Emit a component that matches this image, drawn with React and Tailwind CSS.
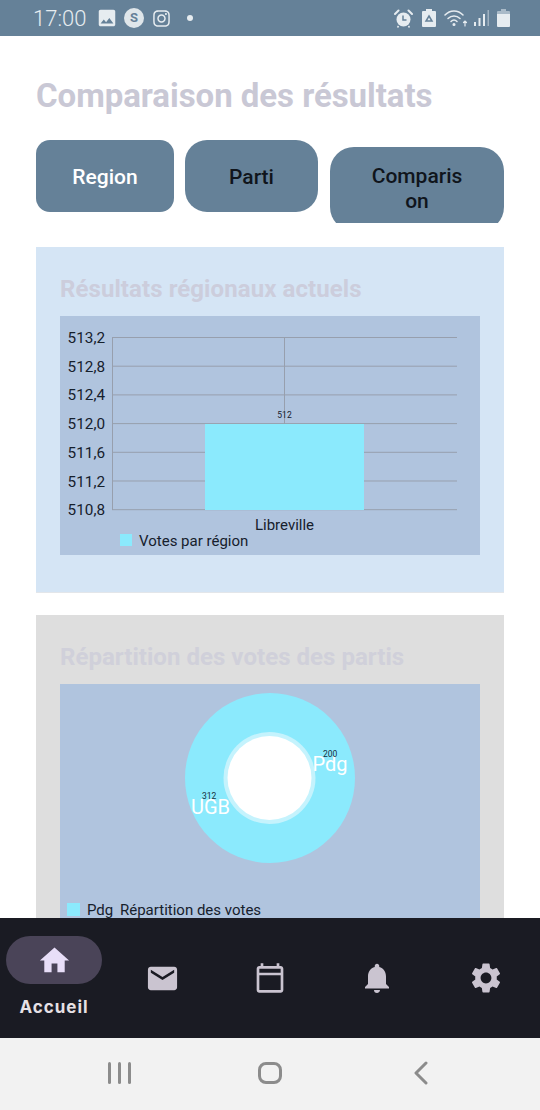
import React from 'react';
import { MdHome, MdEmail, MdNotifications, MdSettings, MdOutlineCalendarToday, MdImage } from 'react-icons/md';
import { FaInstagram } from 'react-icons/fa';

const yLabels = ['513,2', '512,8', '512,4', '512,0', '511,6', '511,2', '510,8'];

const BarChart = () => {
  return (
    <svg width="420" height="239" viewBox="0 0 420 239" className="block">
      <g stroke="#979fad" strokeWidth="1">
        {yLabels.map((label, i) => (
          <line key={label} x1="52" x2="397" y1={21.5 + i * 28.7} y2={21.5 + i * 28.7} />
        ))}
        <line x1="52.5" x2="52.5" y1="21" y2="194" />
        <line x1="224.5" x2="224.5" y1="21" y2="194" />
      </g>
      <rect x="145" y="108" width="159" height="86" fill="#8beafd" />
      <g fontFamily="Roboto, sans-serif" fontSize="15.3" fill="#16202c" textAnchor="end">
        {yLabels.map((label, i) => (
          <text key={label} x="45" y={27 + i * 28.7}>{label}</text>
        ))}
      </g>
      <text x="224.500" y="101.500" textAnchor="middle" fontFamily="Roboto, sans-serif" fontSize="8.5" fill="#16202c">512</text>
      <text x="224.500" y="214" textAnchor="middle" fontFamily="Roboto, sans-serif" fontSize="15" fill="#16202c">Libreville</text>
      <rect x="60" y="218" width="12" height="12" fill="#8beafd" />
      <text x="79" y="230" fontFamily="Roboto, sans-serif" fontSize="15" fill="#16202c">Votes par région</text>
    </svg>
  );
};

const DonutChart = () => {
  return (
    <svg width="420" height="234" viewBox="0 0 420 234" className="block">
      <circle cx="210" cy="94" r="85" fill="#8beafd" />
      <circle cx="209.500" cy="94" r="46" fill="#c5f3fd" />
      <circle cx="209.500" cy="94" r="42" fill="#ffffff" />
      <g fontFamily="Roboto, sans-serif" fill="#ffffff" fontSize="20">
        <text x="252.500" y="87">Pdg</text>
        <text x="131" y="130">UGB</text>
      </g>
      <g fontFamily="Roboto, sans-serif" fill="#16303c" fontSize="8.5">
        <text x="263" y="73">200</text>
        <text x="142" y="115">312</text>
      </g>
      <rect x="7" y="219" width="13" height="13" fill="#8beafd" />
      <text x="27" y="231" fontFamily="Roboto, sans-serif" fontSize="15" fill="#16202c">Pdg</text>
      <text x="60" y="231" fontFamily="Roboto, sans-serif" fontSize="15" fill="#16202c">Répartition des votes</text>
    </svg>
  );
};

const StatusBar = () => {
  return (
    <div className="h-9 shrink-0 bg-[#658198] flex items-center pl-[33px] pr-[30px] text-[#e6ecf0]">
      <span className="text-[22px] font-light w-[63px]">17:00</span>
      <MdImage size={22} />
      <span className="ml-[6px] w-5 h-5 rounded-full bg-[#dfe6ea] text-[#658198] text-[13px] font-bold flex items-center justify-center">S</span>
      <FaInstagram size={19} className="ml-[8px]" />
      <span className="ml-[16px] w-[6px] h-[6px] rounded-full bg-[#e6ecf0]" />
      <div className="ml-auto flex items-center">
        {/* alarm */}
        <svg width="19" height="19" viewBox="0 0 19 19">
          <circle cx="9.5" cy="10.500" r="7" fill="#e6ecf0" />
          <path d="M9 6.500v4.500h3.500" fill="none" stroke="#658198" strokeWidth="1.5" />
          <path d="M1 5l3.500-3.500M18 5l-3.500-3.500" stroke="#e6ecf0" strokeWidth="2" strokeLinecap="round" />
          <path d="M4.500 17l-1 1.500M14.500 17l1 1.500" stroke="#e6ecf0" strokeWidth="1.5" />
        </svg>
        {/* battery saver */}
        <svg width="14" height="18" viewBox="0 0 14 18" className="ml-[9px]">
          <path d="M4 0h6v2h3a1 1 0 0 1 1 1v14a1 1 0 0 1-1 1H1a1 1 0 0 1-1-1V3a1 1 0 0 1 1-1h3z" fill="#e6ecf0" />
          <path d="M7 7l3 5H4z" fill="none" stroke="#658198" strokeWidth="1.5" />
        </svg>
        {/* wifi */}
        <svg width="24" height="18" viewBox="0 0 24 18" className="ml-[8px]" fill="none" stroke="#e6ecf0" strokeWidth="1.5" strokeLinecap="round">
          <path d="M1 6c5-5.500 13-5.500 18 0" />
          <path d="M4 9.500c3.500-3.500 8.500-3.500 12 0" />
          <path d="M7 12.500c2-2 4-2 6 0" />
          <circle cx="10" cy="15.500" r="0.8" fill="#e6ecf0" />
          <path d="M21 17v-5M19.500 13.500L21 12l1.500 1.500" strokeWidth="1.2" />
        </svg>
        {/* signal */}
        <svg width="16" height="18" viewBox="0 0 16 18" className="ml-[6px]">
          <rect x="0" y="13" width="2" height="4" fill="#e6ecf0" />
          <rect x="4.500" y="9" width="2" height="8" fill="#e6ecf0" />
          <rect x="9" y="5" width="2" height="12" fill="#e6ecf0" />
          <rect x="13.500" y="1" width="1.500" height="16" fill="#9fb1c0" />
        </svg>
        {/* battery */}
        <svg width="13" height="18" viewBox="0 0 13 18" className="ml-[7px]">
          <path d="M4 0h5v2h3a1 1 0 0 1 1 1v2H0V3a1 1 0 0 1 1-1h3z" fill="#a9bac8" />
          <path d="M0 5h13v12a1 1 0 0 1-1 1H1a1 1 0 0 1-1-1z" fill="#e6ecf0" />
        </svg>
      </div>
    </div>
  );
};

const App = () => {
  return (
    <div className="w-[540px] h-[1110px] flex flex-col overflow-hidden bg-white font-['Roboto',sans-serif]">
      <StatusBar />

      {/* Content */}
      <main className="flex-1 min-h-0 overflow-hidden px-9">
        <h1 className="mt-[40px] h-[40px] leading-[40px] text-[33px] font-bold tracking-[-0.04px] text-[#c9c8d5] whitespace-nowrap">Comparaison des résultats</h1>

        <div className="mt-6 flex items-start">
          <button className="w-[138px] h-[72px] rounded-[14px] bg-[#658198] text-white text-[21px] font-medium pt-[4px]">Region</button>
          <button className="ml-[11px] w-[133px] h-[72px] rounded-[22px] bg-[#658198] text-[#10151c] text-[21px] font-medium pt-[4px]">Parti</button>
          {/* the label wraps and the pill gets cut off at the bottom */}
          <div className="ml-[12px] mt-[7px] w-[174px] h-[76px] overflow-hidden">
            <button className="w-full h-[84px] block rounded-[24px] bg-[#658198] text-[#10151c] text-[21px] font-medium leading-[25px] pt-[13px] pb-[13px] px-10 break-all">Comparison</button>
          </div>
        </div>

        <section className="mt-6 h-[346px] bg-[#d5e5f5] border-b border-[#e3e6ea] px-6 pt-[26px]">
          <h2 className="h-[33px] leading-[33px] text-2xl font-bold tracking-[0.08px] text-[#cccddc]">Résultats régionaux actuels</h2>
          <div className="mt-[10px] bg-[#b0c4de]">
            <BarChart />
          </div>
        </section>

        <section className="mt-[22px] bg-[#dedede] px-6 pt-[26px] h-[400px]">
          <h2 className="h-[33px] leading-[33px] text-2xl font-bold tracking-[0.04px] text-[#d0d0da]">Répartition des votes des partis</h2>
          <div className="mt-[10px] bg-[#b0c4de]">
            <DonutChart />
          </div>
        </section>
      </main>

      {/* Bottom navigation */}
      <nav className="h-[120px] shrink-0 bg-[#1a1b23] grid grid-cols-5 text-[#cac4d0]">
        <div className="flex flex-col items-center pt-[18px]">
          <div className="w-24 h-12 rounded-full bg-[#4a4458] flex items-center justify-center text-[#e8def8]">
            <MdHome size={35} />
          </div>
          <span className="mt-[11px] text-[17px] font-bold tracking-[1px] text-[#e6e1e5] font-['Inter',sans-serif]">Accueil</span>
        </div>
        <div className="flex items-center justify-center"><MdEmail size={35} /></div>
        <div className="flex items-center justify-center"><MdOutlineCalendarToday size={32} /></div>
        <div className="flex items-center justify-center pr-[2px]"><MdNotifications size={36} /></div>
        <div className="flex items-center justify-center"><MdSettings size={36} /></div>
      </nav>

      {/* Android buttons */}
      <div className="h-[72px] shrink-0 bg-[#f2f2f2] grid grid-cols-3 items-center px-[44px] pb-[3px]">
        <div className="flex justify-center gap-[7px]">
          <span className="w-[3px] h-[22px] rounded-sm bg-[#8c8c8c]" />
          <span className="w-[3px] h-[22px] rounded-sm bg-[#8c8c8c]" />
          <span className="w-[3px] h-[22px] rounded-sm bg-[#8c8c8c]" />
        </div>
        <div className="flex justify-center">
          <span className="w-[24px] h-[22px] rounded-[8px] border-[3px] border-[#8c8c8c]" />
        </div>
        <div className="flex justify-center">
          <svg width="16" height="24" viewBox="0 0 16 24" fill="none" stroke="#8c8c8c" strokeWidth="3" strokeLinecap="round" strokeLinejoin="round">
            <path d="M13 2L3 12l10 10" />
          </svg>
        </div>
      </div>
    </div>
  );
};

export default App;
